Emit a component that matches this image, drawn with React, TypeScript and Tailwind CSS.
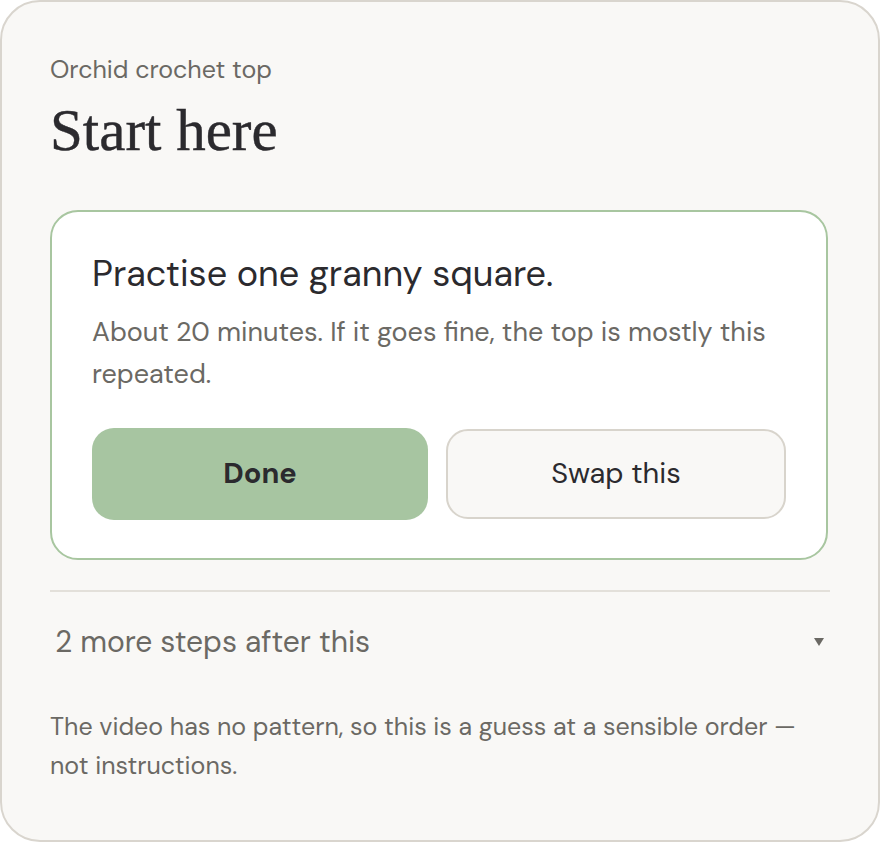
export default function App() {
  const sans = { fontFamily: '"DM Sans", Inter, "Noto Sans", sans-serif' };
  return (
    <div className="w-[880px] h-[842px] bg-white">
      <div
        className="w-[880px] h-[842px] box-border border-2 border-[#d9d5ce] rounded-[40px] bg-[#f9f8f6] pl-[48px] pr-[48px] pt-[52px]"
        style={sans}
      >
        <div className="text-[25px] leading-[32px] text-[#6b6964]">Orchid crochet top</div>
        <h1
          className="mt-[14px] text-[59px] leading-[60px] text-[#2b2a2e] [-webkit-text-stroke:0.4px_#2b2a2e]"
          style={{ fontFamily: '"Liberation Serif", "DejaVu Serif", serif' }}
        >
          Start here
        </h1>
        <div className="mt-[50px] w-[778px] border-2 border-[#a8c6a0] rounded-[28px] bg-white px-[40px] pt-[40px] pb-[38px]">
          <div className="text-[36px] leading-[44px] text-[#2b2a2e]">Practise one granny square.</div>
          <p className="mt-[15px] text-[27px] leading-[42px] text-[#6b6964]">
            About 20 minutes. If it goes fine, the top is mostly this repeated.
          </p>
          <div className="mt-[33px] flex gap-[18px]">
            <button className="flex-1 h-[92px] rounded-[22px] bg-[#a7c5a1] text-[29px] font-bold text-[#2b2a2e]">
              Done
            </button>
            <button className="flex-1 h-[90px] mt-[1px] rounded-[22px] border-2 border-[#d8d4cc] bg-[#f9f8f6] text-[29px] text-[#2b2a2e]">
              Swap this
            </button>
          </div>
        </div>
        <div className="mt-[30px] w-[780px] h-[2px] bg-[#e3e0da]" />
        <div className="mt-[32px] w-[780px] flex items-center justify-between pl-[5px] pr-[6px]">
          <span className="text-[30px] leading-[36px] text-[#6b6964]">2 more steps after this</span>
          <svg width="10" height="10" viewBox="0 0 10 10">
            <polygon points="0,1 10,1 5,9" fill="#6b6964" />
          </svg>
        </div>
        <p className="mt-[47px] w-[760px] text-[25px] leading-[39px] text-[#6b6964]">
          The video has no pattern, so this is a guess at a sensible order — not instructions.
        </p>
      </div>
    </div>
  );
}
